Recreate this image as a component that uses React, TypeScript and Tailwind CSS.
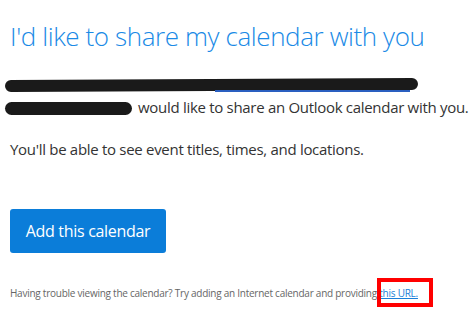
export default function App() {
  return (
    <div className="flex h-[323px] w-[475px] flex-col items-start overflow-hidden bg-white pl-[10px] pt-[19px] font-['Open_Sans',sans-serif]">
      <h1 className="text-[26px] font-light leading-[34px] tracking-[-0.4px] text-[#1a8ae6]">
        I'd like to share my calendar with you
      </h1>
      <div className="mt-[21px] flex flex-col gap-[20px] text-[15px] leading-[22px] tracking-[-0.3px] text-[#333]">
        <div className="flex flex-col">
          <div className="relative h-[22px]">
            <span className="absolute left-[-5px] top-[5px] h-[12px] w-[413px] -rotate-[0.3deg] rounded-full bg-[#1a1a1a]" />
            <span className="absolute left-[205px] top-[16px] h-[2px] w-[195px] bg-[#2a5fc0]" />
          </div>
          <div className="flex items-center">
            <span className="-ml-[5px] mt-[2px] h-[13px] w-[127px] rounded-full bg-[#1a1a1a]" />
            <span className="ml-[6px]">would like to share an Outlook calendar with you.</span>
          </div>
        </div>
        <p>You'll be able to see event titles, times, and locations.</p>
      </div>
      <button
        type="button"
        className="mt-[49px] h-[44px] w-[156px] rounded-[3px] bg-[#0b7dd9] text-[16px] tracking-[-0.3px] text-white"
      >
        Add this calendar
      </button>
      <div className="relative mt-[33px] whitespace-nowrap text-[10px] tracking-[-0.25px] text-[#666]">
        Having trouble viewing the calendar? Try adding an Internet calendar and providing{' '}
        <a href="#" className="text-[#1a7fd9] underline">
          this URL.
        </a>
        <span className="absolute left-[367px] top-[-8px] h-[29px] w-[56px] border-[4px] border-[#ff0000]" />
      </div>
    </div>
  );
}
